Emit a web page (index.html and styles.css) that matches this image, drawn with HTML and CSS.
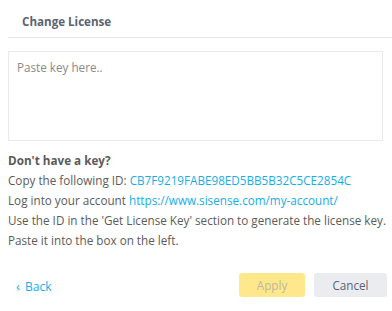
FILE: index.html
```html
<!DOCTYPE html>
<html lang="en">
<head>
  <meta charset="UTF-8" />
  <title>Change License</title>
  <link rel="stylesheet" href="styles.css">
</head>
<body>
  <div class="dialog">
    <div class="dialog-header">Change License</div>

    <div class="dialog-body">
      <textarea class="key-box" placeholder="Paste key here.."></textarea>

      <div class="help">
        <div class="help-title">Don't have a key?</div>
        <div>Copy the following ID: <a href="#" class="link">CB7F9219FABE98ED5BB5B32C5CE2854C</a></div>
        <div>Log into your account <a href="#" class="link">https://www.sisense.com/my-account/</a></div>
        <div>Use the ID in the 'Get License Key' section to generate the license key.</div>
        <div>Paste it into the box on the left.</div>
      </div>
    </div>

    <div class="dialog-footer">
      <a href="#" class="back"><span class="chev">&lsaquo;</span> Back</a>
      <div class="actions">
        <button class="btn btn-apply" disabled>Apply</button>
        <button class="btn btn-cancel">Cancel</button>
      </div>
    </div>
  </div>
</body>
</html>
```

FILE: styles.css
```css
body {
  margin: 0;
  font-family: 'Open Sans', sans-serif;
  background: #fff;
  color: #5b5b5b;
}

.dialog {
  width: 392px;
}

.dialog-header {
  margin-left: 8px;
  padding: 14px 0 0 14px;
  height: 23px;
  border-bottom: 1px solid #e6e6ea;
  font-size: 11.6px;
  font-weight: bold;
  color: #5b6372;
}

.dialog-body {
  padding: 13px 0 0 8px;
}

.key-box {
  display: block;
  box-sizing: border-box;
  width: 375px;
  height: 90px;
  margin: 0;
  padding: 7px 8px;
  border: 1px solid #e9e9e9;
  border-radius: 0;
  resize: none;
  font-family: 'Open Sans', sans-serif;
  font-size: 11.7px;
  color: #5b5b5b;
  outline: none;
}

.key-box::placeholder {
  color: #8a8a8a;
}

.help {
  margin-top: 9px;
  font-size: 11.7px;
  line-height: 20px;
  white-space: nowrap;
}

.help-title {
  font-weight: bold;
}

.link {
  color: #16aee6;
  text-decoration: none;
}

.dialog-footer {
  display: flex;
  justify-content: space-between;
  align-items: center;
  padding: 23px 5px 0 16px;
}

.back {
  color: #16aee6;
  text-decoration: none;
  font-size: 12px;
  margin-top: 2px;
}

.chev {
  font-size: 13px;
  margin-right: 2px;
}

.actions {
  display: flex;
  gap: 9px;
}

.btn {
  height: 24px;
  border: none;
  border-radius: 3px;
  font-family: 'Open Sans', sans-serif;
  font-size: 11.7px;
  cursor: pointer;
}

.btn-apply {
  width: 66px;
  background: #ffe88c;
  color: #bdb89c;
}

.btn-cancel {
  width: 73px;
  background: #ebecf0;
  color: #5b6372;
}
```
